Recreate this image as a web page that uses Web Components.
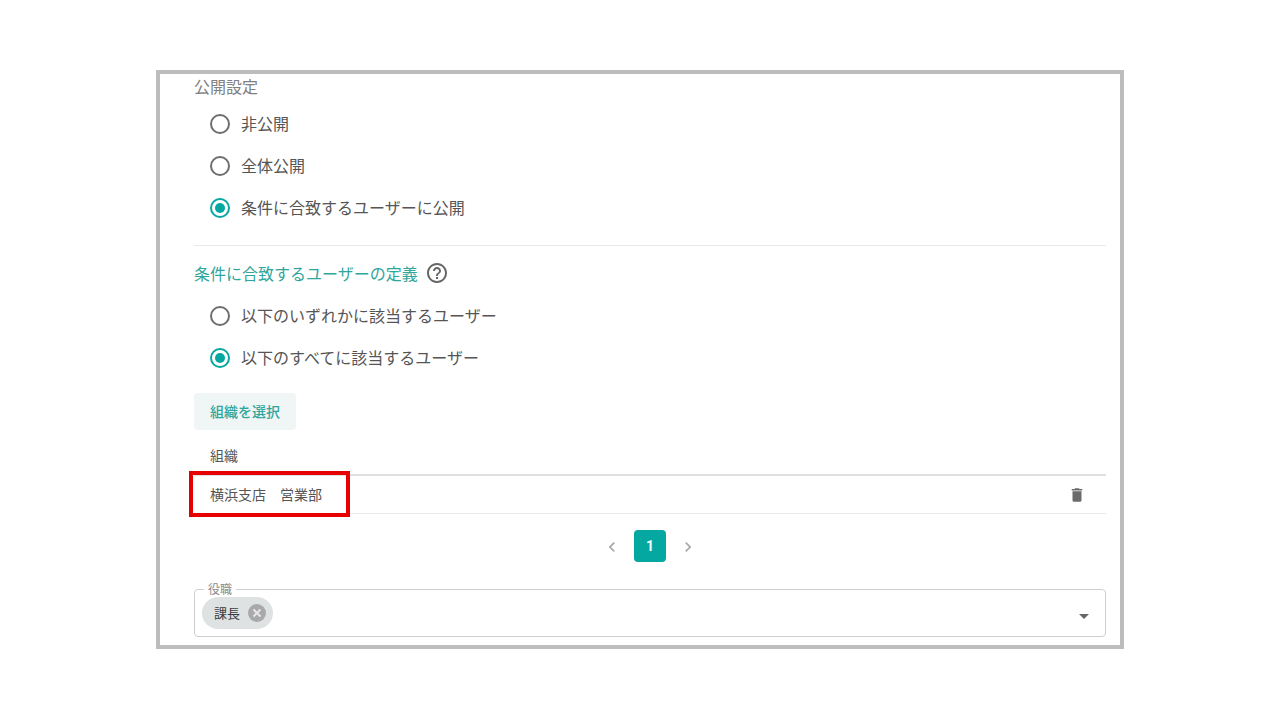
<!DOCTYPE html>
<html lang="ja"><head><meta charset="utf-8">
<style>
html,body{margin:0;padding:0;background:#fff}
body{height:720px;overflow:hidden;font-family:Roboto,"Noto Sans CJK JP",sans-serif;color:#4a4a4a}
</style></head><body>
<app-frame>
  <section-label>公開設定</section-label>
  <radio-row>非公開</radio-row>
  <radio-row>全体公開</radio-row>
  <radio-row checked>条件に合致するユーザーに公開</radio-row>
  <h-divider></h-divider>
  <help-heading>条件に合致するユーザーの定義</help-heading>
  <radio-row>以下のいずれかに該当するユーザー</radio-row>
  <radio-row checked>以下のすべてに該当するユーザー</radio-row>
  <soft-button>組織を選択</soft-button>
  <org-table head="組織">横浜支店　営業部</org-table>
  <page-nav></page-nav>
  <chip-select label="役職"><value-chip>課長</value-chip></chip-select>
</app-frame>
<script>
function def(name,html,init){
  customElements.define(name,class extends HTMLElement{
    constructor(){super();const r=this.attachShadow({mode:'open'});r.innerHTML=html;if(init)init(this,r);}
  });
}
def('app-frame',`<style>
:host{display:block;box-sizing:border-box;width:968px;height:579px;margin:70px auto 0;border:4px solid #bdbdbd;padding:0 14px 0 34px;overflow:hidden}
</style><slot></slot>`);
def('section-label',`<style>
:host{display:block;height:28px;font-size:16px;line-height:28px;color:#808080}
</style><slot></slot>`);
def('radio-row',`<style>
:host{display:flex;align-items:center;height:42px;padding-left:16px;font-size:16px;color:#555}
.r{box-sizing:border-box;width:20px;height:20px;border-radius:50%;border:2px solid #6e6e6e;margin:2px 11px 0 0;flex:none;display:grid;place-items:center}
:host([checked]) .r{border-color:#05a8a0}
:host([checked]) .r::after{content:"";width:10px;height:10px;border-radius:50%;background:#05a8a0}
</style><span class="r"></span><slot></slot>`);
def('h-divider',`<style>
:host{display:block;height:1px;background:#e8e8e8;margin:17px 0 0}
</style>`);
def('help-heading',`<style>
:host{display:flex;align-items:center;height:50px;margin-top:2px;margin-bottom:-4px;font-size:16px;color:#2fa69c}
svg{margin-left:7px;flex:none}
</style><slot></slot><svg width="24" height="24" viewBox="0 0 24 24" fill="#666"><path d="M11 18h2v-2h-2v2zm1-16C6.48 2 2 6.48 2 12s4.48 10 10 10 10-4.48 10-10S17.52 2 12 2zm0 18c-4.41 0-8-3.59-8-8s3.59-8 8-8 8 3.59 8 8-3.59 8-8 8zm0-14c-2.21 0-4 1.79-4 4h2c0-1.1.9-2 2-2s2 .9 2 2c0 2-3 1.75-3 5h2c0-2.25 3-2.5 3-5 0-2.21-1.79-4-4-4z"/></svg>`);
def('soft-button',`<style>
:host{display:block;margin-top:15px}
div{box-sizing:border-box;width:102px;height:37px;padding-bottom:2px;background:#f0f5f5;border-radius:4px;color:#2fa69c;font-size:14px;font-weight:500;display:flex;align-items:center;justify-content:center}
</style><div><slot></slot></div>`);
def('org-table',`<style>
:host{display:block;position:relative;font-size:14px;color:#555}
.h{box-sizing:border-box;height:46px;padding:8px 0 0 16px;line-height:36px;border-bottom:2px solid #e0e0e0}
.r{box-sizing:border-box;height:38px;padding:0 20px 0 16px;display:flex;align-items:center;justify-content:space-between;border-bottom:1px solid #e8e8e8}
.r span{padding-bottom:2px}
svg{display:block}
.mark{position:absolute;left:-5px;top:41px;width:161px;height:46px;box-sizing:border-box;border:4px solid #e60000}
</style><div class="h"></div><div class="r"><span><slot></slot></span><svg width="18" height="18" viewBox="0 0 24 24" fill="#6b6b6b"><path d="M6 19c0 1.1.9 2 2 2h8c1.1 0 2-.9 2-2V7H6v12zM19 4h-3.5l-1-1h-5l-1 1H5v2h14V4z"/></svg></div><div class="mark"></div>`,
(el,r)=>{r.querySelector('.h').textContent=el.getAttribute('head')});
def('page-nav',`<style>
:host{display:flex;align-items:center;justify-content:center;height:32px;margin-top:16px;gap:6px}
button{all:unset;display:grid;place-items:center;width:32px;height:32px}
.on{background:#05a8a0;color:#f4fbfb;border-radius:4px;font:700 14px Roboto,sans-serif;text-align:center}
svg{margin-top:1px}
</style><button aria-label="前へ"><svg width="20" height="20" viewBox="0 0 24 24" fill="#a8a8a8"><path d="M15.41 7.41 14 6l-6 6 6 6 1.41-1.41L10.83 12z"/></svg></button><button class="on">1</button><button aria-label="次へ"><svg width="20" height="20" viewBox="0 0 24 24" fill="#a8a8a8"><path d="M10 6 8.59 7.41 13.17 12l-4.58 4.59L10 18l6-6z"/></svg></button>`);
def('chip-select',`<style>
:host{display:block;position:relative;box-sizing:border-box;height:48px;margin-top:27px;border:1px solid #cfcfcf;border-radius:4px;padding:7px 7px}
.l{position:absolute;left:9px;top:-7px;padding:0 4px;background:#fff;font-size:12px;line-height:14px;color:#8a8a8a}
.a{position:absolute;right:16px;top:24px;width:0;height:0;border:5px solid transparent;border-top:5px solid #666;border-bottom:0}
</style><span class="l"></span><slot></slot><span class="a"></span>`,
(el,r)=>{r.querySelector('.l').textContent=el.getAttribute('label')});
def('value-chip',`<style>
:host{display:inline-flex;align-items:center;box-sizing:border-box;height:32px;width:71px;padding:0 0 2px 12px;border-radius:16px;background:#dfe2e3;font-size:13px;color:#3c3c3c}
svg{margin:2px 0 0 7px;flex:none}
</style><slot></slot><svg width="20" height="20" viewBox="0 0 20 20"><circle cx="10" cy="10" r="9" fill="#a9a9a9"/><path d="M6.5 6.5l7 7M13.5 6.5l-7 7" stroke="#e4e6e7" stroke-width="2"/></svg>`);
</script>
</body></html>
